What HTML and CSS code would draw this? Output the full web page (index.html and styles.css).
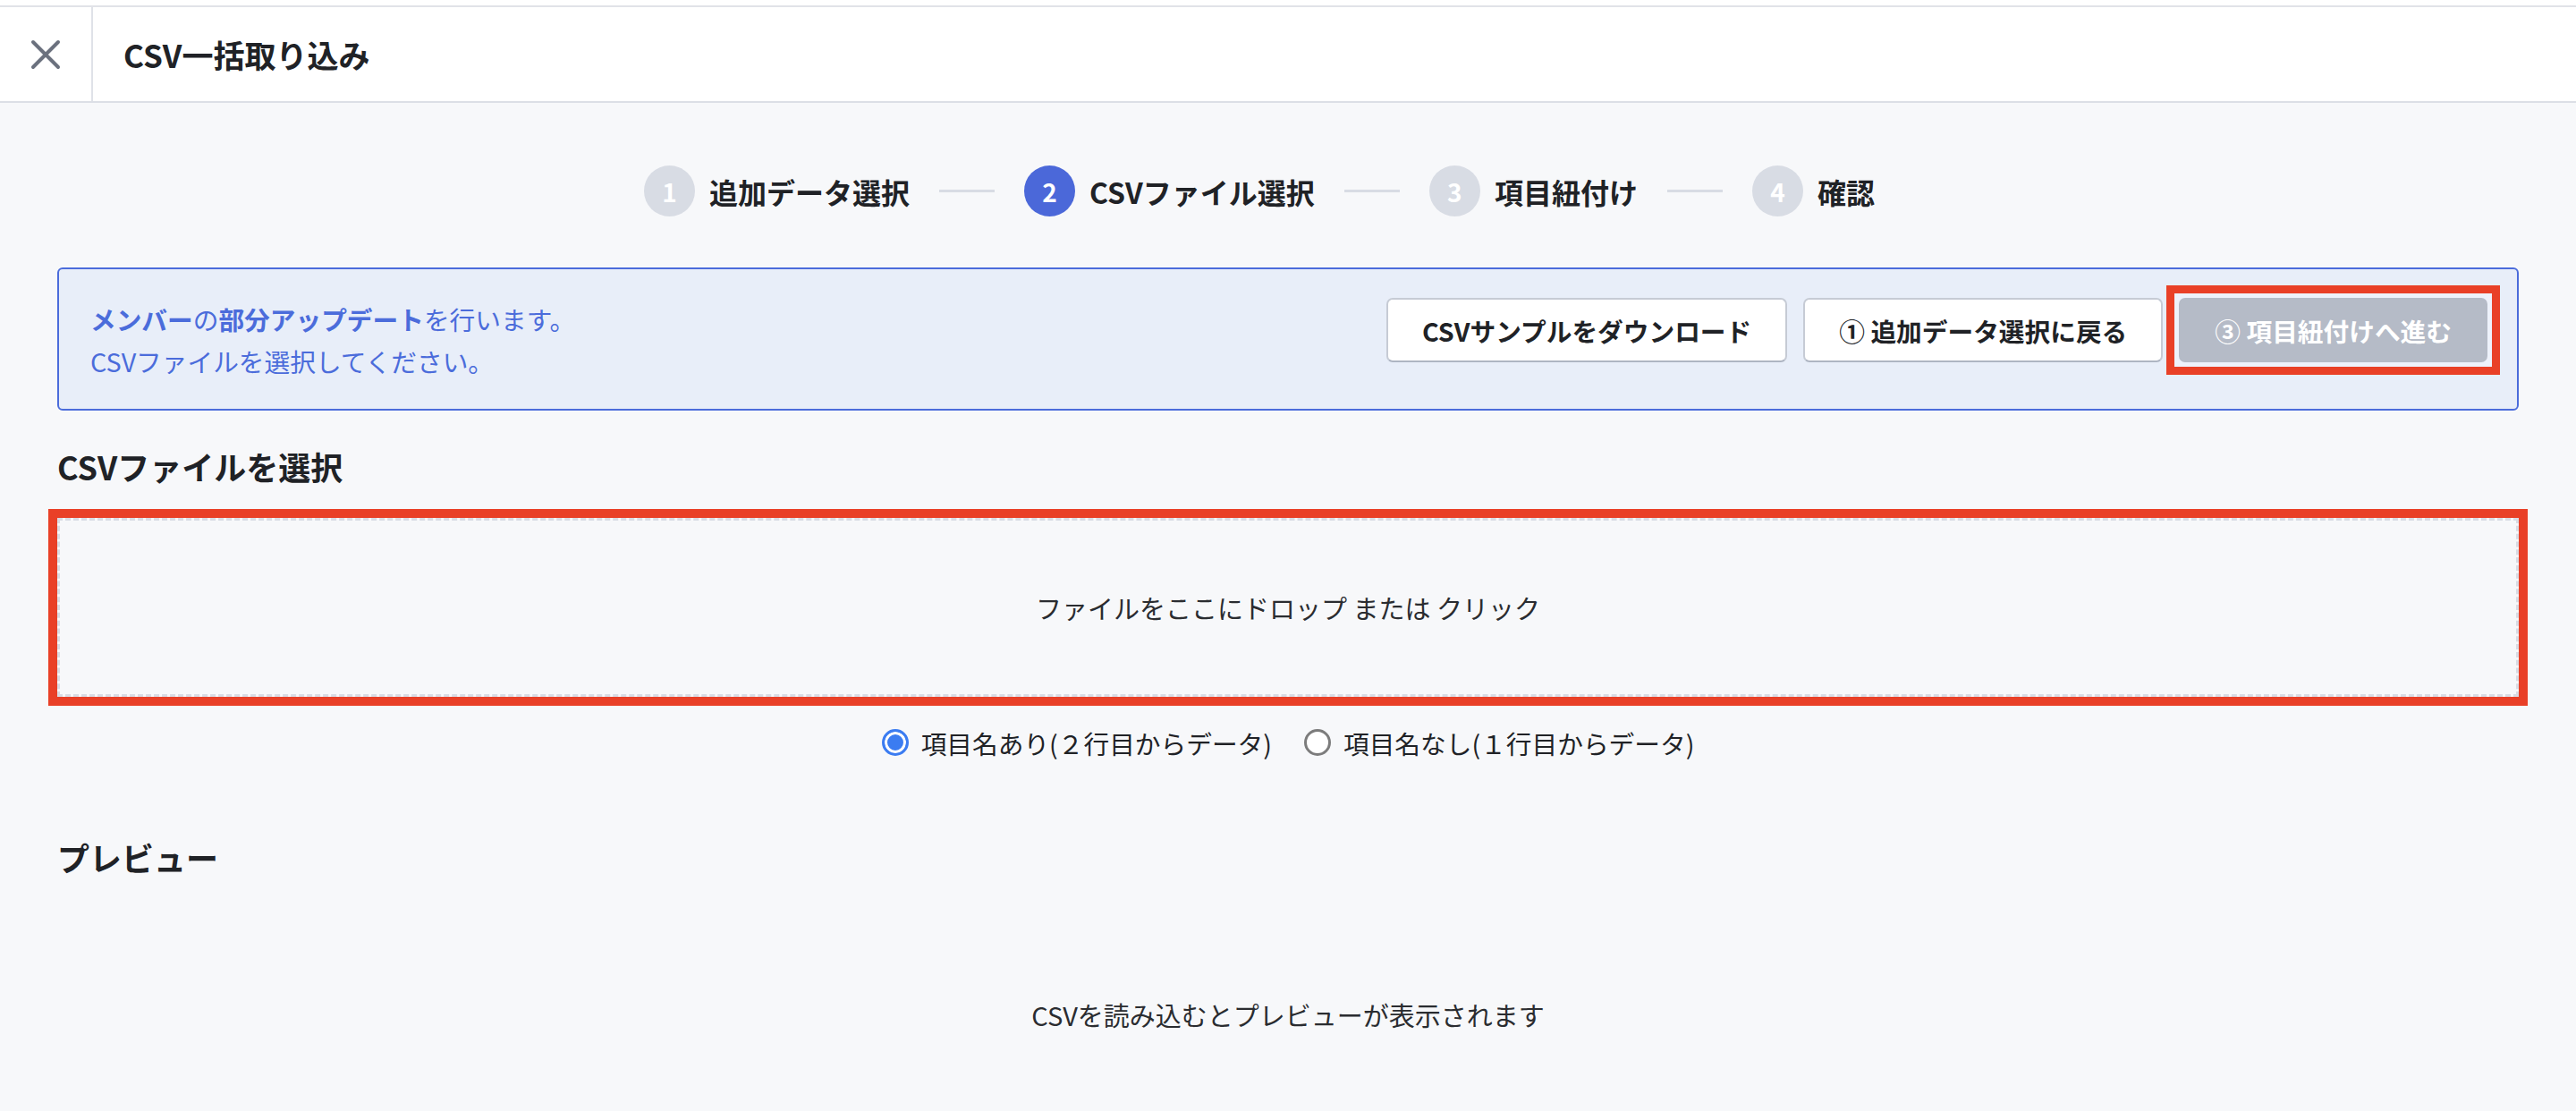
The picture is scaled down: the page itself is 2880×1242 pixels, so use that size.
FILE: index.html
```html
<!DOCTYPE html>
<html lang="ja">
<head>
    <meta charset="UTF-8">
    <meta name="viewport" content="width=device-width, initial-scale=1.0">
    <title>CSV一括取り込み</title>
    <link rel="stylesheet" href="styles.css">
</head>
<body>
    <div class="top-strip"></div>
    <header class="header">
        <button type="button" class="close-btn" aria-label="閉じる">
            <svg width="34" height="34" viewBox="0 0 34 34">
                <path d="M3 3 L31 31 M31 3 L3 31" stroke="#6b717e" stroke-width="4" stroke-linecap="round" fill="none"/>
            </svg>
        </button>
        <h1 class="title">CSV一括取り込み</h1>
    </header>

    <main class="main">
        <ol class="stepper">
            <li class="step"><span class="step-num">1</span><span class="step-label">追加データ選択</span></li>
            <li class="step-line"></li>
            <li class="step active"><span class="step-num">2</span><span class="step-label">CSVファイル選択</span></li>
            <li class="step-line"></li>
            <li class="step"><span class="step-num">3</span><span class="step-label">項目紐付け</span></li>
            <li class="step-line"></li>
            <li class="step"><span class="step-num">4</span><span class="step-label">確認</span></li>
        </ol>

        <div class="notice">
            <div class="notice-text">
                <p><strong>メンバー</strong>の<strong>部分アップデート</strong>を行います。</p>
                <p>CSVファイルを選択してください。</p>
            </div>
            <div class="notice-actions">
                <button type="button" class="btn">CSVサンプルをダウンロード</button>
                <button type="button" class="btn">① 追加データ選択に戻る</button>
                <span class="mark-box">
                    <button type="button" class="btn btn-disabled" disabled>③ 項目紐付けへ進む</button>
                </span>
            </div>
        </div>

        <h2 class="section-title">CSVファイルを選択</h2>
        <div class="dropzone mark-wide">ファイルをここにドロップ または クリック</div>

        <div class="radio-row">
            <label class="radio"><input type="radio" name="header" checked>項目名あり(２行目からデータ)</label>
            <label class="radio"><input type="radio" name="header">項目名なし(１行目からデータ)</label>
        </div>

        <h2 class="section-title preview-title">プレビュー</h2>
        <div class="preview-empty">CSVを読み込むとプレビューが表示されます</div>
    </main>
</body>
</html>
```

FILE: styles.css
```css
body {
    margin: 0;
    padding: 0;
    font-family: "Noto Sans CJK JP", "Noto Sans", sans-serif;
    background-color: #f7f8fa;
    color: #202226;
}

.top-strip {
    height: 6px;
    background-color: #fff;
}

.header {
    display: flex;
    align-items: center;
    height: 105px;
    background-color: #fff;
    border-top: 2px solid #e1e3e8;
    border-bottom: 2px solid #dcdfe6;
}

.close-btn {
    width: 104px;
    height: 100%;
    display: flex;
    align-items: center;
    justify-content: center;
    padding: 0;
    background: none;
    border: none;
    border-right: 2px solid #dfe2e8;
    cursor: pointer;
}

.title {
    margin: 0 0 0 34px;
    font-size: 35px;
    font-weight: 700;
    color: #202226;
}

.main {
    padding: 0 64px;
}

/* Stepper */
.stepper {
    display: flex;
    align-items: center;
    justify-content: center;
    list-style: none;
    margin: 70px 0 0;
    padding: 0 64px 0 0;
}

.step {
    display: flex;
    align-items: center;
    gap: 16px;
}

.step-num {
    width: 57px;
    height: 57px;
    border-radius: 50%;
    background-color: #d8dce4;
    color: #fff;
    display: flex;
    align-items: center;
    justify-content: center;
    font-size: 28px;
    font-weight: 700;
}

.step.active .step-num {
    background-color: #4b68d9;
}

.step-label {
    font-size: 32px;
    font-weight: 700;
}

.step-line {
    width: 62px;
    height: 3px;
    margin: 0 33px;
    background-color: #d8dce4;
}

/* Notice box */
.notice {
    display: flex;
    justify-content: space-between;
    align-items: flex-start;
    margin-top: 57px;
    padding: 32px 33px 30px 35px;
    background-color: #e8eef9;
    border: 2px solid #4b6cdb;
    border-radius: 6px;
    color: #4b6cdb;
}

.notice-text p {
    margin: 0;
    font-size: 28.7px;
    line-height: 47px;
}

.notice-actions {
    display: flex;
    align-items: center;
    gap: 18px;
}

.btn {
    height: 72px;
    padding: 0 38px;
    font-family: inherit;
    font-size: 28.7px;
    font-weight: 700;
    color: #202226;
    background-color: #fff;
    border: 2px solid #c6cbd5;
    border-bottom-color: #aeb5c3;
    border-radius: 7px;
    cursor: pointer;
}

.btn-disabled {
    display: block;
    background-color: #b5bbc7;
    border-color: #b5bbc7;
    color: #fff;
    cursor: default;
}

/* red highlight marks */
.mark-box {
    margin: -14px;
    padding: 5px;
    border: 9px solid #e94027;
    background-color: #eef2fb;
}

.mark-wide {
    outline: 10px solid #e94027;
    outline-offset: 0;
}

.section-title {
    margin: 36px 0 0;
    font-size: 36px;
    font-weight: 700;
    line-height: 52px;
}

.dropzone {
    margin-top: 32px;
    height: 194px;
    border: 3px dashed #d9dce4;
    display: flex;
    align-items: center;
    justify-content: center;
    font-size: 29px;
    color: #2a2c30;
    cursor: pointer;
}

.radio-row {
    display: flex;
    justify-content: center;
    gap: 36px;
    margin-top: 29px;
    height: 44px;
    align-items: center;
}

.radio {
    display: flex;
    align-items: center;
    gap: 14px;
    font-size: 28.7px;
    cursor: pointer;
}

.radio input {
    appearance: none;
    margin: 0;
    width: 30px;
    height: 30px;
    border-radius: 50%;
    border: 3px solid #7c7c7c;
    background-color: #fff;
}

.radio input:checked {
    border-color: #3b7cf1;
    background-color: #3b7cf1;
    box-shadow: inset 0 0 0 3px #fff;
}

.preview-title {
    margin-top: 80px;
}

.preview-empty {
    height: 300px;
    display: flex;
    align-items: center;
    justify-content: center;
    font-size: 29px;
    color: #2a2c30;
}
```
